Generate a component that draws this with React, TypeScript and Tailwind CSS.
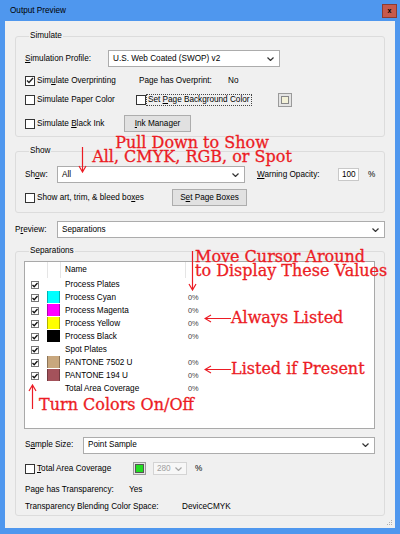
import React from 'react';

const ui = "font-['Liberation_Sans',Arial,sans-serif] text-[8.2px] leading-[10px] text-black";
const red = "font-['DejaVu_Serif',serif] text-[16px] leading-[14px] text-[#ec1c24] [-webkit-text-stroke:0.3px_#ec1c24] whitespace-nowrap";

const U = ({ children }: { children: React.ReactNode }) => (
  <span className="underline underline-offset-[1px]">{children}</span>
);

const Tick = () => (
  <svg width="8" height="7" viewBox="0 0 8 7">
    <path d="M1 3.5 L3 5.5 L7 1" fill="none" stroke="#222" strokeWidth="1.4" />
  </svg>
);

const Checkbox = ({ checked = false }: { checked?: boolean }) => (
  <span className="w-[10px] h-[10px] shrink-0 border border-[#333] bg-white flex items-center justify-center">
    {checked && <Tick />}
  </span>
);

const Chevron = ({ color = '#333' }: { color?: string }) => (
  <svg width="7" height="4" viewBox="0 0 7 4">
    <path d="M0.5 0.5 L3.5 3.5 L6.5 0.5" fill="none" stroke={color} strokeWidth="1.2" />
  </svg>
);

const Select = ({ value, className = '' }: { value: string; className?: string }) => (
  <div className={`h-[17px] border border-[#acacac] bg-white flex items-center justify-between pl-[4px] pr-[5px] ${className}`}>
    <span>{value}</span>
    <Chevron />
  </div>
);

const Button = ({ children, className = '' }: { children: React.ReactNode; className?: string }) => (
  <div className={`h-[17px] border border-[#adadad] bg-[#e1e1e1] flex items-center justify-center ${className}`}>
    {children}
  </div>
);

type Sep = { name: string; checked?: boolean; color?: string; value?: string };

const separations: Sep[] = [
  { name: 'Process Plates', checked: true },
  { name: 'Process Cyan', checked: true, color: '#00ffff', value: '0%' },
  { name: 'Process Magenta', checked: true, color: '#ff00ff', value: '0%' },
  { name: 'Process Yellow', checked: true, color: '#ffff00', value: '0%' },
  { name: 'Process Black', checked: true, color: '#000000', value: '0%' },
  { name: 'Spot Plates', checked: true },
  { name: 'PANTONE 7502 U', checked: true, color: '#c8a77e', value: '0%' },
  { name: 'PANTONE 194 U', checked: true, color: '#a4525b', value: '0%' },
  { name: 'Total Area Coverage', value: '0%' },
];

const MiniCheck = () => (
  <svg width="8" height="8" viewBox="0 0 8 8">
    <rect x="0.5" y="0.5" width="7" height="7" fill="#fff" stroke="#777" />
    <path d="M1.5 4 L3.2 5.8 L6.5 2" fill="none" stroke="#111" strokeWidth="1.3" />
  </svg>
);

const SeparationList = () => (
  <div className="-ml-px mt-[5px] h-[168px] border border-[#a9a9a9] bg-white">
    <div className="flex h-[16px]">
      <div className="w-[23px] border-r border-[#e5e5e5]" />
      <div className="w-[13px] border-r border-[#e5e5e5]" />
      <div className="w-[125px] border-r border-[#e5e5e5] pl-[4px] flex items-center">Name</div>
      <div className="flex-1" />
    </div>
    {separations.map((s) => (
      <div key={s.name} className="flex h-[13px] items-center">
        <div className="w-[22px] pl-[6px] flex items-center">{s.checked && <MiniCheck />}</div>
        <div className="w-[14px] h-[13px] flex items-start">
          {s.color && <div className="w-[13px] h-[12px] border-x border-black/30" style={{ backgroundColor: s.color }} />}
        </div>
        <div className="w-[125px] pl-[4px]">{s.name}</div>
        <div className="pl-[2px] text-[7.4px] text-[#444]">{s.value}</div>
      </div>
    ))}
  </div>
);

export default function App() {
  return (
    <div className={`${ui} relative w-[400px] h-[534px] bg-[#4f97ee] flex flex-col`}>
      <div className="h-[21px] shrink-0 flex items-center justify-between pl-[10px] pr-[3px]">
        <span>Output Preview</span>
        <div className="w-[15px] h-[14px] bg-[#c75a4c] border border-[#8e3b31] flex items-center justify-center text-[7px] font-bold leading-none">
          x
        </div>
      </div>

      <div className="relative flex-1 mx-[5px] mb-[6px] bg-[#f0f0f0] flex flex-col">
        {/* Simulate */}
        <fieldset className="mx-[10px] mt-[10px] border border-[#dcdcdc] rounded-[3px] pl-[9px] pr-[9px] pb-[4px]">
          <legend className="ml-[4px] px-[1px] leading-[10px]">Simulate</legend>
          <div className="mt-[9px] h-[17px] flex items-center">
            <span className="w-[83px]"><U>S</U>imulation Profile:</span>
            <Select value="U.S. Web Coated (SWOP) v2" className="w-[172px]" />
          </div>
          <div className="mt-[7px] h-[13px] flex items-center">
            <div className="w-[114px] flex items-center gap-[2px]">
              <Checkbox checked />
              <span>Sim<U>u</U>late Overprinting</span>
            </div>
            <span className="w-[89px]">Page has Overprint:</span>
            <span>No</span>
          </div>
          <div className="mt-[6px] h-[14px] flex items-center">
            <div className="w-[111px] flex items-center gap-[2px]">
              <Checkbox />
              <span>Simulate Paper Color</span>
            </div>
            <Checkbox />
            <span className="border border-dotted border-[#444] px-[1px] leading-[10px]">
              Set <U>P</U>age Background Color
            </span>
            <div className="ml-[26px] w-[14px] h-[14px] border border-[#9a9a9a] bg-[#e4e4e4] flex items-center justify-center">
              <div className="w-[8px] h-[8px] border border-[#888] bg-[#f3f1d8]" />
            </div>
          </div>
          <div className="mt-[8px] h-[17px] flex items-center">
            <div className="w-[99px] flex items-center gap-[2px]">
              <Checkbox />
              <span>Simulate <U>B</U>lack Ink</span>
            </div>
            <Button className="w-[67px]"><span><U>I</U>nk Manager</span></Button>
          </div>
        </fieldset>

        {/* Show */}
        <fieldset className="mx-[10px] mt-[9px] border border-[#dcdcdc] rounded-[3px] pl-[9px] pr-[9px] pb-[6px]">
          <legend className="ml-[4px] px-[1px] leading-[10px]">Show</legend>
          <div className="mt-[10px] h-[17px] flex items-center">
            <span className="w-[32px]">Sh<U>o</U>w:</span>
            <Select value="All" className="w-[188px]" />
            <span className="ml-[12px] w-[81px]"><U>W</U>arning Opacity:</span>
            <div className="w-[21px] h-[13px] border border-[#c8c8c8] bg-white pl-[3px] flex items-center">100</div>
            <span className="ml-[9px]">%</span>
          </div>
          <div className="mt-[6px] h-[17px] flex items-center">
            <div className="w-[147px] flex items-center gap-[2px]">
              <Checkbox />
              <span>Show art, trim, &amp; bleed bo<U>x</U>es</span>
            </div>
            <Button className="w-[75px]"><span>S<U>e</U>t Page Boxes</span></Button>
          </div>
        </fieldset>

        {/* Preview */}
        <div className="mx-[10px] mt-[8px] h-[17px] flex items-center">
          <span className="w-[42px]">P<U>r</U>eview:</span>
          <Select value="Separations" className="flex-1" />
        </div>

        {/* Separations */}
        <fieldset className="mx-[10px] mt-[8px] border border-[#dcdcdc] rounded-[3px] pl-[9px] pr-[9px] pb-[2px]">
          <legend className="ml-[4px] px-[1px] leading-[10px]">Separations</legend>
          <SeparationList />
          <div className="mt-[8px] h-[16px] flex items-center">
            <span className="w-[58px]">S<U>a</U>mple Size:</span>
            <Select value="Point Sample" className="flex-1 h-[16px]" />
          </div>
          <div className="mt-[9px] h-[13px] flex items-center">
            <div className="w-[108px] flex items-center gap-[2px]">
              <Checkbox />
              <span><U>T</U>otal Area Coverage</span>
            </div>
            <div className="w-[13px] h-[13px] border border-[#9a9a9a] bg-[#e4e4e4] flex items-center justify-center">
              <div className="w-[9px] h-[9px] border border-[#555] bg-[#22dd22]" />
            </div>
            <div className="ml-[7px] w-[34px] h-[13px] border border-[#d4d4d4] bg-[#f7f7f7] flex items-center justify-between pl-[3px] pr-[4px] text-[#a0a0a0]">
              <span>280</span>
              <Chevron color="#a8a8a8" />
            </div>
            <span className="ml-[8px]">%</span>
          </div>
          <div className="mt-[8px] h-[13px] flex items-center">
            <span className="w-[104px]">Page has Transparency:</span>
            <span>Yes</span>
          </div>
          <div className="mt-[4px] h-[13px] flex items-center">
            <span className="w-[157px]">Transparency Blending Color Space:</span>
            <span>DeviceCMYK</span>
          </div>
        </fieldset>

        <svg className="absolute right-[2px] bottom-[2px]" width="6" height="6" viewBox="0 0 6 6">
          <rect x="4" y="0" width="1" height="1" fill="#b0b0b0" />
          <rect x="2" y="2" width="1" height="1" fill="#b0b0b0" />
          <rect x="4" y="2" width="1" height="1" fill="#b0b0b0" />
          <rect x="0" y="4" width="1" height="1" fill="#b0b0b0" />
          <rect x="2" y="4" width="1" height="1" fill="#b0b0b0" />
          <rect x="4" y="4" width="1" height="1" fill="#b0b0b0" />
        </svg>
      </div>

      {/* annotations */}
      <div className={`${red} absolute left-[82px] top-[136px] w-[220px] text-center`}>
        <div>Pull Down to Show</div>
        <div>All, CMYK, RGB, or Spot</div>
      </div>
      <svg className="absolute left-[78px] top-[147px]" width="9" height="26" viewBox="0 0 9 26">
        <path d="M4.5 0 V25 M1 19 L4.5 25 L8 19" fill="none" stroke="#ec1c24" strokeWidth="1.2" />
      </svg>

      <div className={`${red} absolute left-[195px] top-[250px]`}>
        <div>Move Cursor Around</div>
        <div>to Display These Values</div>
      </div>
      <svg className="absolute left-[188px] top-[251px]" width="9" height="40" viewBox="0 0 9 40">
        <path d="M4.5 0 V39 M1 33 L4.5 39 L8 33" fill="none" stroke="#ec1c24" strokeWidth="1.2" />
      </svg>

      <svg className="absolute left-[204px] top-[314px]" width="27" height="9" viewBox="0 0 27 9">
        <path d="M1 4.5 H27 M7 1 L1 4.5 L7 8" fill="none" stroke="#ec1c24" strokeWidth="1.2" />
      </svg>
      <div className={`${red} absolute left-[231px] top-[311px]`}>Always Listed</div>

      <svg className="absolute left-[204px] top-[365px]" width="27" height="9" viewBox="0 0 27 9">
        <path d="M1 4.5 H27 M7 1 L1 4.5 L7 8" fill="none" stroke="#ec1c24" strokeWidth="1.2" />
      </svg>
      <div className={`${red} absolute left-[231px] top-[362px]`}>Listed if Present</div>

      <svg className="absolute left-[28px] top-[384px]" width="9" height="25" viewBox="0 0 9 25">
        <path d="M4.5 1 V25 M1 7 L4.5 1 L8 7" fill="none" stroke="#ec1c24" strokeWidth="1.2" />
      </svg>
      <div className={`${red} absolute left-[39px] top-[398px]`}>Turn Colors On/Off</div>
    </div>
  );
}
